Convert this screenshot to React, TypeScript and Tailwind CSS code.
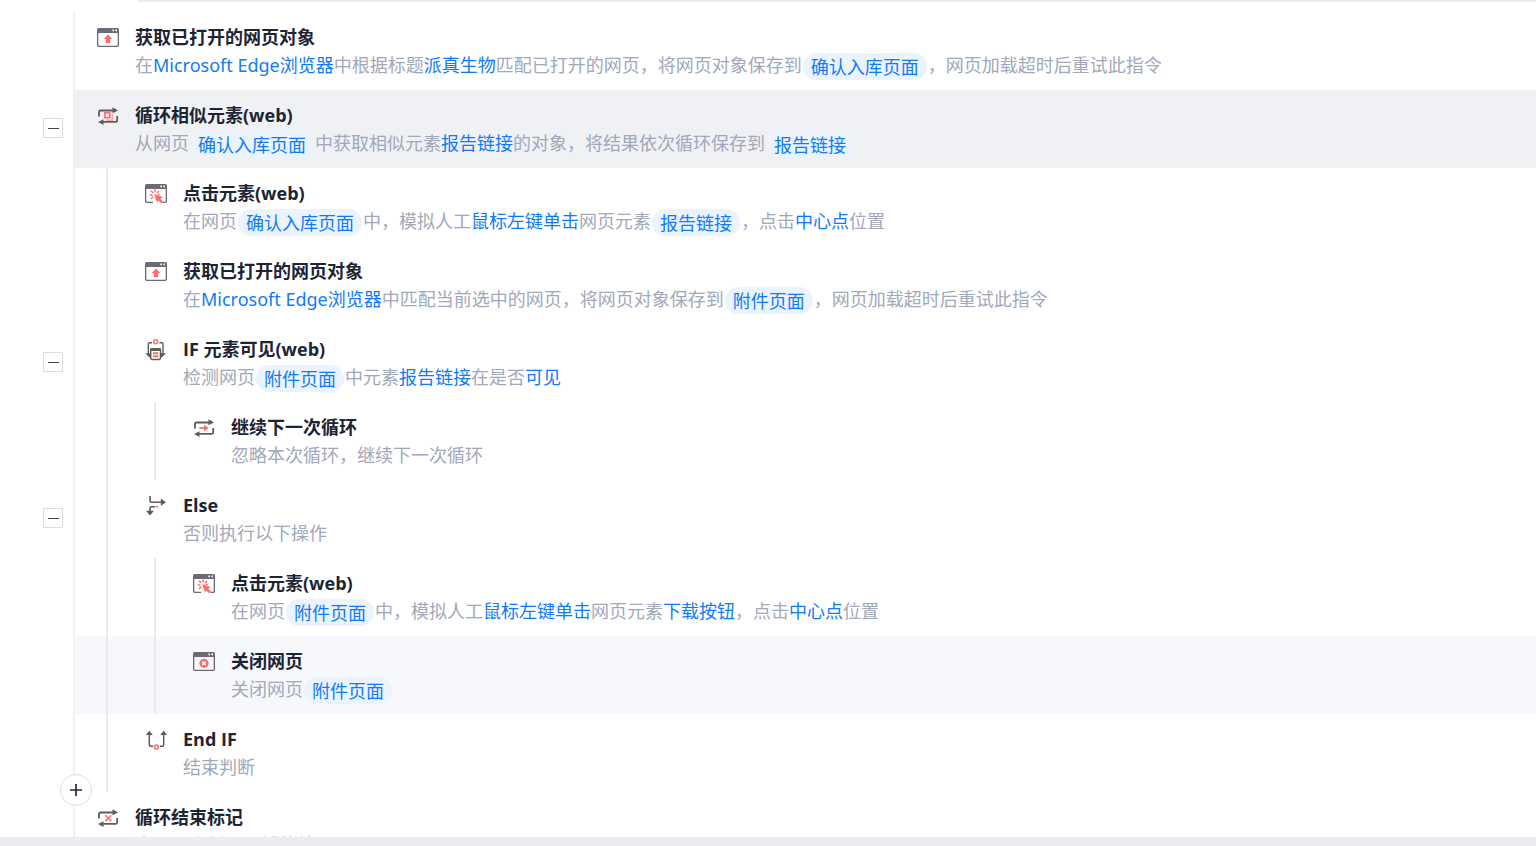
import type { ReactNode } from "react";
import clsx from "clsx";

function Param({ children }: { children: ReactNode }) {
  return (
    <a href="#" className="text-[#0f7bf5]">
      {children}
    </a>
  );
}

function Variable({ children }: { children: ReactNode }) {
  return (
    <a href="#" className="mx-px mt-0.5 h-[27px] rounded-full bg-[#ebf3ff] px-2 pt-px leading-[27px] text-[#0f7bf5]">
      {children}
    </a>
  );
}

function Icon({ children }: { children: ReactNode }) {
  return (
    <svg className="mt-[15px] size-[22px] shrink-0" viewBox="0 0 22 22" fill="none" aria-hidden="true">
      {children}
    </svg>
  );
}

function WindowFrame({ open = false }: { open?: boolean }) {
  return (
    <>
      <path
        d={open ? "M8 19.4H2Q.6 19.4 .6 18V4M17.5 19.4H20Q21.4 19.4 21.4 18V4" : "M.6 4V18Q.6 19.4 2 19.4H20Q21.4 19.4 21.4 18V4"}
        stroke="#6c6b75"
        strokeWidth="1.4"
      />
      <path d="M0 6V2.5Q0 1 1.5 1H20.5Q22 1 22 2.5V6Z" fill="#6c6b75" />
      <path d="M15.4 2.6H17V4.2H15.4ZM18.4 2.6H20V4.2H18.4Z" fill="#fff" />
    </>
  );
}

function LoopFrame() {
  return (
    <>
      <path d="M2 11.5V7Q2 5.5 3.5 5.5H16M20.2 11V15Q20.2 16.8 18.7 16.8H6" stroke="#5c5c5c" strokeWidth="1.8" />
      <path d="M15.5 2.2L21 5.5L15.5 8.2ZM6.5 14.2L1 17L6.5 20Z" fill="#5c5c5c" />
    </>
  );
}

function OpenPageIcon() {
  return (
    <Icon>
      <WindowFrame />
      <path d="M11 7.5L15.3 12H13.2V16H8.8V12H6.7Z" fill="#fb6d6f" />
    </Icon>
  );
}

function ClickIcon() {
  return (
    <Icon>
      <WindowFrame open />
      <path
        d="M10 9.3V6.5M8.2 10L6 7.8M7.5 12H4.8M8.2 13.8L6.1 15.9M12 10L14 8M12.7 11.5H14.8"
        stroke="#fb6d6f"
        strokeWidth="1.5"
      />
      <path d="M9.3 11L18 14.2L15.2 15.5L18 18.4L16 20.3L13.2 17.4L12 19.8Z" fill="#fb6d6f" />
    </Icon>
  );
}

function ClosePageIcon() {
  return (
    <Icon>
      <WindowFrame />
      <circle cx="11" cy="12.3" r="4.6" fill="#fb6d6f" />
      <path d="M9.3 10.6L12.7 14M12.7 10.6L9.3 14" stroke="#fff" strokeWidth="1.6" />
    </Icon>
  );
}

function LoopElementsIcon() {
  return (
    <Icon>
      <LoopFrame />
      <path d="M15.3 9V15.2H9" stroke="#fca3a5" strokeWidth="1.5" />
      <path d="M7.8 7.8H12.8V12.8H7.8Z" stroke="#fb6d6f" strokeWidth="1.6" />
    </Icon>
  );
}

function ContinueIcon() {
  return (
    <Icon>
      <LoopFrame />
      <path d="M6.3 11H12" stroke="#fb6d6f" strokeWidth="1.8" />
      <path d="M11 7.7L15.7 11L11 14.3Z" fill="#fb6d6f" />
    </Icon>
  );
}

function LoopEndIcon() {
  return (
    <Icon>
      <LoopFrame />
      <path d="M8.3 8.3L14.3 14.3M14.3 8.3L8.3 14.3" stroke="#fb6d6f" strokeWidth="1.6" />
    </Icon>
  );
}

function IfIcon() {
  return (
    <Icon>
      <path d="M7 3.7H4.3Q3.3 3.7 3.3 4.7V15M14.5 3.7H17Q18 3.7 18 4.7V15" stroke="#5c5c5c" strokeWidth="1.4" />
      <path d="M.3 14.3H5.5V18.3H4.2ZM15.8 14.3H21L17 18.3H15.8Z" fill="#5c5c5c" />
      <circle cx="10.6" cy="2.8" r="2" stroke="#fb6d6f" strokeWidth="1.5" />
      <rect x="5.7" y="9.7" width="9.8" height="10.8" rx="1.4" fill="#fff" stroke="#5c5c5c" strokeWidth="1.5" />
      <path d="M5.5 9.2H15.7V12H5.5Z" fill="#5c5c5c" />
      <path d="M8 14.3H13.3M8 17.2H13.3" stroke="#fb6d6f" strokeWidth="1.9" />
    </Icon>
  );
}

function ElseIcon() {
  return (
    <Icon>
      <path d="M5 1V5.7Q5 7.2 6.5 7.2H16M10 11.7H6.5Q5 11.7 5 13.2V17" stroke="#5c5c5c" strokeWidth="1.6" />
      <path d="M15.8 3.5L21 7.2L15.8 10.8ZM1 15.8H9L5 20.5Z" fill="#5c5c5c" />
      <path d="M10.8 11.7H13" stroke="#fb6d6f" strokeWidth="1.6" />
    </Icon>
  );
}

function EndIfIcon() {
  return (
    <Icon>
      <path d="M4.3 5V15.8Q4.3 17.3 5.8 17.3H8M18.7 5V15.8Q18.7 17.3 17.2 17.3H15" stroke="#5c5c5c" strokeWidth="1.5" />
      <path d="M.8 6L4.3 1.8L7.8 6ZM15.2 6L18.7 1.8L22 6Z" fill="#5c5c5c" />
      <circle cx="11.4" cy="18" r="2" stroke="#fb6d6f" strokeWidth="1.5" />
    </Icon>
  );
}

type Step = {
  depth: number;
  icon: ReactNode;
  title: string;
  body: ReactNode;
  collapsible?: boolean;
  state?: "selected" | "hovered";
};

const steps: Step[] = [
  {
    depth: 0,
    icon: <OpenPageIcon />,
    title: "获取已打开的网页对象",
    body: (
      <>
        在<Param>Microsoft Edge浏览器</Param>中根据标题<Param>派真生物</Param>匹配已打开的网页，将网页对象保存到
        <Variable>确认入库页面</Variable>，网页加载超时后重试此指令
      </>
    ),
  },
  {
    depth: 0,
    icon: <LoopElementsIcon />,
    title: "循环相似元素(web)",
    collapsible: true,
    state: "selected",
    body: (
      <>
        从网页<Variable>确认入库页面</Variable>中获取相似元素<Param>报告链接</Param>的对象，将结果依次循环保存到
        <Variable>报告链接</Variable>
      </>
    ),
  },
  {
    depth: 1,
    icon: <ClickIcon />,
    title: "点击元素(web)",
    body: (
      <>
        在网页<Variable>确认入库页面</Variable>中，模拟人工<Param>鼠标左键单击</Param>网页元素
        <Variable>报告链接</Variable>，点击<Param>中心点</Param>位置
      </>
    ),
  },
  {
    depth: 1,
    icon: <OpenPageIcon />,
    title: "获取已打开的网页对象",
    body: (
      <>
        在<Param>Microsoft Edge浏览器</Param>中匹配当前选中的网页，将网页对象保存到
        <Variable>附件页面</Variable>，网页加载超时后重试此指令
      </>
    ),
  },
  {
    depth: 1,
    icon: <IfIcon />,
    title: "IF 元素可见(web)",
    collapsible: true,
    body: (
      <>
        检测网页<Variable>附件页面</Variable>中元素<Param>报告链接</Param>在是否<Param>可见</Param>
      </>
    ),
  },
  {
    depth: 2,
    icon: <ContinueIcon />,
    title: "继续下一次循环",
    body: "忽略本次循环，继续下一次循环",
  },
  {
    depth: 1,
    icon: <ElseIcon />,
    title: "Else",
    collapsible: true,
    body: "否则执行以下操作",
  },
  {
    depth: 2,
    icon: <ClickIcon />,
    title: "点击元素(web)",
    body: (
      <>
        在网页<Variable>附件页面</Variable>中，模拟人工<Param>鼠标左键单击</Param>网页元素
        <Param>下载按钮</Param>，点击<Param>中心点</Param>位置
      </>
    ),
  },
  {
    depth: 2,
    icon: <ClosePageIcon />,
    title: "关闭网页",
    state: "hovered",
    body: (
      <>
        关闭网页<Variable>附件页面</Variable>
      </>
    ),
  },
  { depth: 1, icon: <EndIfIcon />, title: "End IF", body: "结束判断" },
  { depth: 0, icon: <LoopEndIcon />, title: "循环结束标记", body: "表示一个循环区域的结尾" },
];

function StepRow({ step, last }: { step: Step; last: boolean }) {
  return (
    <li className="relative flex shrink-0">
      <div className="flex w-[73px] shrink-0 justify-end pr-2.5">
        {step.collapsible && (
          <button
            aria-label="折叠"
            className="mt-7 flex size-5 items-center justify-center border border-[#dcdcdc] bg-white"
          >
            <span className="h-px w-[11px] bg-[#444]" />
          </button>
        )}
      </div>
      {last && (
        <button
          aria-label="添加"
          className="absolute -top-[18px] left-[60px] z-10 flex size-8 items-center justify-center rounded-full border border-[#dedede] bg-white"
        >
          <svg className="size-3" viewBox="0 0 12 12" stroke="#22283a" strokeWidth="1.7" aria-hidden="true">
            <path d="M6 0V12M0 6H12" />
          </svg>
        </button>
      )}
      <div
        className={clsx(
          "flex min-w-0 flex-1 border-l-2 border-[#f0f1f7]",
          step.state === "selected" && "bg-[#f0f1f5]",
          step.state === "hovered" && "bg-[#f7f8fc]"
        )}
      >
        {Array.from({ length: step.depth }, (_, i) => (
          <span key={i} className="ml-[31px] w-[17px] shrink-0 border-l-2 border-[#ebebed]" />
        ))}
        <div className="flex gap-4 pl-[22px]">
          {step.icon}
          <div className="pt-[11px] pb-2.5 whitespace-nowrap">
            <h3 className="h-7 leading-[29px] font-bold text-[#1d2433]">{step.title}</h3>
            <p className="flex h-[29px] items-start font-['Noto_Sans','Noto_Sans_CJK_SC',sans-serif] leading-[29px] font-normal text-[#a1a8b9]">
              {step.body}
            </p>
          </div>
        </div>
      </div>
    </li>
  );
}

export default function App() {
  return (
    <div className="flex h-screen flex-col overflow-hidden bg-white font-['Open_Sans','Noto_Sans_CJK_SC',sans-serif] text-lg">
      <div className="ml-[137px] h-0.5 shrink-0 rounded-bl-sm bg-[#ebecf0]" />
      <ul className="mt-2.5 flex min-h-0 flex-1 flex-col overflow-hidden">
        {steps.map((step, i) => (
          <StepRow key={i} step={step} last={i === steps.length - 1} />
        ))}
      </ul>
      <div className="h-[9px] shrink-0 bg-[#ebecf0]" />
    </div>
  );
}
